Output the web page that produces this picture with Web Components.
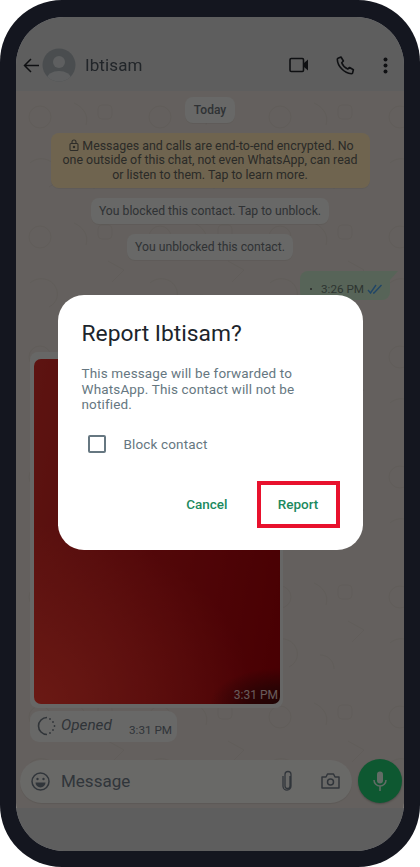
<!DOCTYPE html>
<html>
<head>
<meta charset="utf-8">
<style>
    html, body { margin: 0; background: #fff; }
    body { font-family: Roboto, "Liberation Sans", sans-serif; }
</style>
</head>
<body>
<phone-frame>
    <chat-header name="Ibtisam"></chat-header>
    <chat-area>
        <system-pill kind="date">Today</system-pill>
        <system-pill kind="notice">Messages and calls are end-to-end encrypted. No one outside of this chat, not even WhatsApp, can read or listen to them. Tap to learn more.</system-pill>
        <system-pill>You blocked this contact. Tap to unblock.</system-pill>
        <system-pill>You unblocked this contact.</system-pill>
        <sent-bubble time="3:26 PM"></sent-bubble>
        <image-bubble time="3:31 PM"></image-bubble>
        <opened-bubble time="3:31 PM"></opened-bubble>
        <message-bar slot="footer"></message-bar>
    </chat-area>
    <report-dialog slot="dialog" name="Ibtisam"></report-dialog>
</phone-frame>

<script>
// colours below the scrim are brighter than what ends up on screen, scrim is 56% black

class PhoneFrame extends HTMLElement {
    constructor() {
        super();
        this.attachShadow({ mode: 'open' });
        this.shadowRoot.innerHTML = `
            <style>
                :host { display: block; width: 420px; height: 867px; box-sizing: border-box; padding: 17px 16px 16px; background: #14161f; border-radius: 62px; }
                .screen { position: relative; display: flex; flex-direction: column; height: 100%; overflow: hidden; border-radius: 48px; background: #d6d6d6; }
                .content { display: flex; flex-direction: column; flex: 1; min-height: 0; padding-bottom: 43px; filter: blur(0.35px); }
                .scrim { position: absolute; inset: 0; display: flex; justify-content: center; align-items: center; padding-bottom: 23px; background: rgba(0, 0, 0, 0.56); }
            </style>
            <div class="screen">
                <div class="content"><slot></slot></div>
                <div class="scrim"><slot name="dialog"></slot></div>
            </div>
        `;
    }
}

class ChatHeader extends HTMLElement {
    constructor() {
        super();
        this.attachShadow({ mode: 'open' });
    }

    connectedCallback() {
        this.shadowRoot.innerHTML = `
            <style>
                :host { display: flex; align-items: center; flex: none; height: 74px; box-sizing: border-box; padding: 22px 16px 0 7px; color: #4c545d; }
                svg { display: block; flex: none; }
                .name { flex: 1; margin-left: 9px; font-size: 17px; letter-spacing: 0.1px; }
                .video { margin-right: 27px; }
                .call { margin-right: 28px; }
            </style>
            <svg width="17" height="17" viewBox="0 0 17 17" fill="none" stroke="#22252b" stroke-width="1.5"><path d="M16 8.5H1.5M8 2 1.5 8.5 8 15"/></svg>
            <svg width="34" height="34" viewBox="0 0 34 34" style="margin-left:2px">
                <defs><clipPath id="av"><circle cx="17" cy="17" r="16.5"/></clipPath></defs>
                <circle cx="17" cy="17" r="16.5" fill="#a9b0b4"/>
                <g clip-path="url(#av)" fill="#d5d9db">
                    <circle cx="17" cy="14" r="6"/>
                    <ellipse cx="17" cy="31" rx="12" ry="8"/>
                </g>
            </svg>
            <span class="name">${this.getAttribute('name')}</span>
            <svg class="video" width="20" height="16" viewBox="0 0 20 16" fill="none" stroke="#22252b" stroke-width="1.6"><rect x="1" y="1.5" width="13.5" height="13" rx="1.2"/><path d="M15 6 19 2.5V13.5L15 10Z" fill="#22252b" stroke="none"/></svg>
            <svg class="call" width="19" height="19" viewBox="0 0 19 19" fill="none" stroke="#22252b" stroke-width="1.6" stroke-linejoin="round"><path d="M2 2.2 5 1l2.4 4-1.7 1.8c.9 2.4 3.2 5 6 6.2l1.9-1.5 3.8 2.3-.9 3.4c-.2.5-.6.6-1.1.6C8 17.200 1.500 10 1.300 3.200c0-.5.200-.8.700-1z"/></svg>
            <svg width="5" height="17" viewBox="0 0 5 17" fill="#22252b"><circle cx="2.500" cy="2.500" r="2"/><circle cx="2.500" cy="8.500" r="2"/><circle cx="2.500" cy="14.500" r="2"/></svg>
        `;
    }
}

class ChatArea extends HTMLElement {
    constructor() {
        super();
        this.attachShadow({ mode: 'open' });
        const wallpaper = encodeURIComponent(
            '<svg xmlns="http://www.w3.org/2000/svg" width="120" height="120" fill="none" stroke="#000" stroke-opacity=".035" stroke-width="1">' +
            '<circle cx="24" cy="26" r="11"/><path d="M58 12c9 4 15 12 12 22M92 50l16 9-12 12M14 72c8-7 20-5 25 3s2 17-6 21M64 84c8 0 14 6 14 14"/><rect x="82" y="14" width="14" height="14" rx="4"/></svg>'
        );
        this.shadowRoot.innerHTML = `
            <style>
                :host { display: flex; flex-direction: column; flex: 1; min-height: 0; background: #e4dbd5 url("data:image/svg+xml,${wallpaper}"); }
                .list { display: flex; flex-direction: column; align-items: center; flex: 1; min-height: 0; padding: 6px 0 0; }
                .footer { flex: none; }
            </style>
            <div class="list"><slot></slot></div>
            <div class="footer"><slot name="footer"></slot></div>
        `;
    }
}

class SystemPill extends HTMLElement {
    constructor() {
        super();
        this.attachShadow({ mode: 'open' });
    }

    connectedCallback() {
        const notice = this.getAttribute('kind') === 'notice';
        const lock = `<svg class="lock" width="10" height="12" viewBox="0 0 10 12" fill="none" stroke="#66645c" stroke-width="1.100"><rect x="1" y="4.500" width="8" height="7" rx="1"/><path d="M3 4.500V3a2 2 0 0 1 4 0v1.500"/><circle cx="5" cy="8" r=".7" fill="#66645c"/></svg>`;
        this.shadowRoot.innerHTML = `
            <style>
                :host { display: block; flex: none; box-sizing: border-box; margin-bottom: 10px; padding: 6px 8px 0; height: 26px; border-radius: 8px; background: #ececea; color: #6c7378; font-size: 12.200px; line-height: 15px; text-align: center; white-space: nowrap; box-shadow: 0 1px 0 rgba(0,0,0,0.05); }
                :host([kind="date"]) { width: 50px; padding: 6px 0 0; font-weight: 500; font-size: 12px; }
                :host([kind="notice"]) { width: 319px; height: 55px; padding: 6px 10px 0; background: #fde4b4; color: #62625b; font-size: 12.400px; line-height: 14.400px; white-space: normal; }
                .lock { margin: 0 3px -1px 3px; }
            </style>
            ${notice ? lock : ''}<slot></slot>
        `;
    }
}

class SentBubble extends HTMLElement {
    constructor() {
        super();
        this.attachShadow({ mode: 'open' });
    }

    connectedCallback() {
        this.shadowRoot.innerHTML = `
            <style>
                :host { position: relative; display: flex; flex: none; align-self: flex-end; align-items: center; box-sizing: border-box; width: 90px; height: 29px; margin: 1px 14px 52px 0; padding: 7px 0 0 10px; border-radius: 8px 0 8px 8px; background: #c6e4c8; color: #6a7970; font-size: 11.700px; white-space: nowrap; }
                :host::after { content: ""; position: absolute; top: 0; right: -8px; border-top: 9px solid #c6e4c8; border-right: 8px solid transparent; }
                .dot { flex: none; width: 2px; height: 2px; margin-right: 9px; background: #555; border-radius: 50%; }
                svg { flex: none; margin-left: 3px; }
            </style>
            <span class="dot"></span>
            <span>${this.getAttribute('time')}</span>
            <svg width="16" height="10" viewBox="0 0 16 10" fill="none" stroke="#4a9ee8" stroke-width="1.400"><path d="M1 6l2.500 3L9 1M6 9l1 0L14.500 1"/></svg>
        `;
    }
}

class ImageBubble extends HTMLElement {
    constructor() {
        super();
        this.attachShadow({ mode: 'open' });
    }

    connectedCallback() {
        this.shadowRoot.innerHTML = `
            <style>
                :host { display: block; flex: none; align-self: flex-start; box-sizing: border-box; width: 253px; height: 356px; margin-left: 14px; padding: 7px 3px 4px 4px; border-radius: 8px; background: #ebebe9; }
                .photo { position: relative; height: 100%; border-radius: 7px; background:
                    radial-gradient(70px 36px at 100% 100%, #480b0b 0%, rgba(72,11,11,0.7) 45%, rgba(72,11,11,0) 100%),
                    radial-gradient(220px 180px at 0% 100%, rgba(255,66,52,0.75) 0%, rgba(255,66,52,0) 100%),
                    linear-gradient(100deg, #d42e28 0%, #bc1216 50%, #a40007 100%); }
                .time { position: absolute; right: 2px; bottom: 2px; color: #eccfcf; font-size: 12px; }
            </style>
            <div class="photo"><span class="time">${this.getAttribute('time')}</span></div>
        `;
    }
}

class OpenedBubble extends HTMLElement {
    constructor() {
        super();
        this.attachShadow({ mode: 'open' });
    }

    connectedCallback() {
        this.shadowRoot.innerHTML = `
            <style>
                :host { display: flex; flex: none; align-self: flex-start; box-sizing: border-box; width: 147px; height: 31px; margin: 3px 0 0 14px; padding: 0 5px 0 6px; border-radius: 9px; background: #ececea; color: #6e7781; }
                svg { margin: 5px 5px 0 0; }
                .label { margin-top: 5px; font-size: 15.300px; font-style: italic; }
                .time { margin: 12px 0 0 auto; font-size: 11.700px; }
            </style>
            <svg width="20" height="20" viewBox="0 0 20 20" fill="none" stroke="#6e7781" stroke-width="1.600"><path d="M11 1.500a8.500 8.500 0 0 0 0 17"/><path d="M14 3v0M17 6v0M18.500 10v0M17 14v0M14 17v0" stroke-linecap="round" stroke-width="1.800"/></svg>
            <span class="label">Opened</span>
            <span class="time">${this.getAttribute('time')}</span>
        `;
    }
}

class MessageBar extends HTMLElement {
    constructor() {
        super();
        this.attachShadow({ mode: 'open' });
        this.shadowRoot.innerHTML = `
            <style>
                :host { display: flex; align-items: center; gap: 6px; padding: 0 2px 5px 4px; }
                svg { display: block; flex: none; }
                .field { display: flex; align-items: center; flex: 1; height: 43px; box-sizing: border-box; padding: 0 12px 0 11px; border-radius: 22px; background: #f0eeeb; color: #6f7a85; box-shadow: 0 1px 1px rgba(0,0,0,0.08); }
                .text { flex: 1; margin-left: 11px; font-size: 17px; }
                .clip { margin-right: 27px; }
                .mic { display: flex; align-items: center; justify-content: center; flex: none; width: 44px; height: 44px; border-radius: 50%; background: #20c870; box-shadow: 0 1px 2px rgba(0,0,0,0.25); }
            </style>
            <div class="field">
                <svg width="19" height="19" viewBox="0 0 19 19" fill="none" stroke="#6f7a85" stroke-width="1.500"><circle cx="9.500" cy="9.500" r="8.500"/><circle cx="6.500" cy="7" r="1.200" fill="#6f7a85" stroke="none"/><circle cx="12.500" cy="7" r="1.200" fill="#6f7a85" stroke="none"/><path d="M4.500 10.500h10a5 5 0 0 1-10 0z" fill="#6f7a85" stroke="none"/></svg>
                <span class="text">Message</span>
                <svg class="clip" width="13" height="22" viewBox="0 0 13 22" fill="none" stroke="#6f7a85" stroke-width="1.300"><path d="M9 6v10a2.500 2.500 0 0 1-5 0V4.500a3 3 0 0 1 6 0V16a4 4 0 0 1-8 .2V6"/></svg>
                <svg width="19" height="16" viewBox="0 0 19 16" fill="none" stroke="#6f7a85" stroke-width="1.500"><path d="M1 4h4l1.500-3h6L14 4h4v11H1z" stroke-linejoin="round"/><circle cx="9.500" cy="9" r="3"/></svg>
            </div>
            <div class="mic">
                <svg width="14" height="20" viewBox="0 0 14 20" fill="none" stroke="#dff5e8" stroke-width="1.500"><rect x="4" y="0.500" width="6" height="12" rx="3" fill="#dff5e8" stroke="none"/><path d="M1 9a6 6 0 0 0 12 0M7 15v5"/></svg>
            </div>
        `;
    }
}

class ReportDialog extends HTMLElement {
    constructor() {
        super();
        this.attachShadow({ mode: 'open' });
    }

    connectedCallback() {
        this.shadowRoot.innerHTML = `
            <style>
                :host { display: block; box-sizing: border-box; width: 305px; height: 255px; padding: 26px 23px 21px 24px; border-radius: 26px; background: #fff; color: #667781; }
                h2 { margin: 0 0 19px; color: #1c252c; font-size: 22.800px; font-weight: 400; line-height: 26px; }
                p { margin: 0; font-size: 13.500px; line-height: 15.600px; letter-spacing: 0.15px; }
                .check { display: flex; align-items: center; margin: 22px 0 0 6px; font-size: 13.500px; letter-spacing: 0.15px; }
                .box { flex: none; width: 14px; height: 14px; margin-right: 18px; border: 2px solid #667781; border-radius: 2px; }
                .actions { display: flex; justify-content: flex-end; align-items: center; margin: 28px 0 0; color: #1c8a5e; font-size: 13.500px; font-weight: 500; }
                .report { display: flex; justify-content: center; align-items: center; box-sizing: border-box; width: 83px; height: 47px; margin: 0 0 0 29px; border: 4px solid #e8112d; }
            </style>
            <h2>Report ${this.getAttribute('name')}?</h2>
            <p>This message will be forwarded to WhatsApp. This contact will not be notified.</p>
            <div class="check"><span class="box"></span>Block contact</div>
            <div class="actions">
                <span>Cancel</span>
                <span class="report">Report</span>
            </div>
        `;
    }
}

customElements.define('phone-frame', PhoneFrame);
customElements.define('chat-header', ChatHeader);
customElements.define('chat-area', ChatArea);
customElements.define('system-pill', SystemPill);
customElements.define('sent-bubble', SentBubble);
customElements.define('image-bubble', ImageBubble);
customElements.define('opened-bubble', OpenedBubble);
customElements.define('message-bar', MessageBar);
customElements.define('report-dialog', ReportDialog);
</script>
</body>
</html>
